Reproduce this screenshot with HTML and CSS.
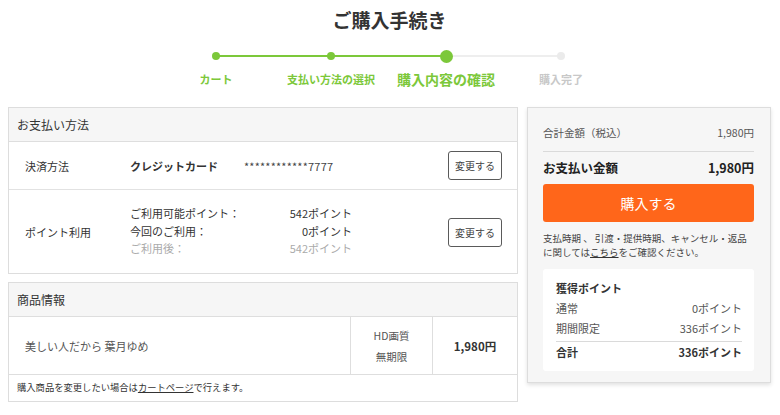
FILE: index.html
```html
<!DOCTYPE html>
<html lang="ja">
<head>
<meta charset="utf-8">
<title>ご購入手続き</title>
<link rel="stylesheet" href="styles.css">
</head>
<body>
<div class="page">
  <h1 class="title">ご購入手続き</h1>
  <ol class="steps">
    <li class="step done first"><span class="dot-row"><span class="dot"></span></span><span class="label">カート</span></li>
    <li class="step done"><span class="dot-row"><span class="dot"></span></span><span class="label">支払い方法の選択</span></li>
    <li class="step current"><span class="dot-row"><span class="dot"></span></span><span class="label">購入内容の確認</span></li>
    <li class="step todo"><span class="dot-row"><span class="dot"></span></span><span class="label">購入完了</span></li>
  </ol>

  <div class="main">
    <div class="left">
      <section class="card">
        <div class="card-head">お支払い方法</div>
        <div class="row row-method">
          <div class="row-label">決済方法</div>
          <div class="method-name">クレジットカード</div>
          <div class="card-number">************7777</div>
          <button class="change-btn">変更する</button>
        </div>
        <div class="row row-points">
          <div class="row-label">ポイント利用</div>
          <div class="points-grid">
            <span>ご利用可能ポイント：</span><span class="val">542ポイント</span>
            <span>今回のご利用：</span><span class="val">0ポイント</span>
            <span class="muted">ご利用後：</span><span class="val muted">542ポイント</span>
          </div>
          <button class="change-btn">変更する</button>
        </div>
      </section>

      <section class="card product-card">
        <div class="card-head">商品情報</div>
        <div class="product-row">
          <div class="product-title">美しい人だから 葉月ゆめ</div>
          <div class="product-quality"><span>HD画質</span><span>無期限</span></div>
          <div class="product-price">1,980円</div>
        </div>
        <div class="product-foot">購入商品を変更したい場合は<a href="#" class="ulink">カートページ</a>で行えます。</div>
      </section>
    </div>

    <aside class="summary">
      <div class="sum-row sum-total">
        <span>合計金額（税込）</span><span>1,980円</span>
      </div>
      <div class="sum-row sum-pay">
        <span>お支払い金額</span><span>1,980円</span>
      </div>
      <button class="buy-btn">購入する</button>
      <p class="note">支払時期 、 引渡・提供時期、キャンセル・返品<br>に関しては<a href="#" class="ulink">こちら</a>をご確認ください。</p>
      <div class="earn">
        <div class="earn-head">獲得ポイント</div>
        <div class="earn-row"><span>通常</span><span>0ポイント</span></div>
        <div class="earn-row"><span>期間限定</span><span>336ポイント</span></div>
        <div class="earn-row earn-total"><span>合計</span><span>336ポイント</span></div>
      </div>
    </aside>
  </div>
</div>
</body>
</html>
```

FILE: styles.css
```css
* { box-sizing: border-box; }

body {
  margin: 0;
  background: #fff;
  color: #333;
  font-family: "Noto Sans CJK JP", "Noto Sans", sans-serif;
  font-size: 11px;
}

.page {
  padding: 8px 9px 0 8px;
}

.title {
  margin: 0;
  text-align: center;
  font-size: 19px;
  line-height: 24px;
  font-weight: 700;
  color: #333;
}

.steps {
  list-style: none;
  margin: 17px 0 0;
  padding: 0 2px 0 0;
  display: grid;
  grid-template-columns: repeat(4, 115px);
  justify-content: center;
}

.step {
  display: flex;
  flex-direction: column;
  align-items: center;
}

.dot-row {
  position: relative;
  width: 100%;
  height: 14px;
  display: flex;
  align-items: center;
  justify-content: center;
}

.dot-row::before {
  content: "";
  position: absolute;
  left: -50%;
  right: 50%;
  top: 6px;
  height: 2px;
  background: #7cc83a;
}

.first .dot-row::before { display: none; }
.todo .dot-row::before { background: #eeeeee; }

.dot {
  position: relative;
  z-index: 1;
  width: 8px;
  height: 8px;
  border-radius: 50%;
  background: #7cc83a;
}

.current .dot { width: 13px; height: 13px; }
.todo .dot { background: #ebebeb; }

.label {
  margin-top: 8px;
  height: 16px;
  line-height: 16px;
  font-size: 11px;
  font-weight: 700;
  color: #7cc83a;
  white-space: nowrap;
}

.current .label { font-size: 14px; }
.todo .label { color: #c8c8c8; }

.main {
  margin-top: 20px;
  display: flex;
  gap: 9px;
  align-items: flex-start;
}

.left { width: 510px; }

.card {
  border: 1px solid #dddddd;
  background: #fff;
}

.card-head {
  height: 34px;
  line-height: 33px;
  padding-left: 8px;
  background: #f6f6f6;
  border-bottom: 1px solid #dedede;
  font-size: 12px;
  color: #333;
}

.row {
  display: flex;
  align-items: center;
  padding: 0 15px 0 16px;
  color: #333;
}

.row-method {
  height: 48px;
  border-bottom: 1px solid #e2e2e2;
}

.row-points { height: 83px; }

.row-label { width: 105px; }

.method-name {
  width: 114px;
  font-weight: 700;
}

.card-number {
  letter-spacing: 0.2px;
  color: #444;
}

.points-grid {
  width: 222px;
  display: grid;
  grid-template-columns: 1fr auto;
  line-height: 17.5px;
}

.points-grid .val { text-align: right; }
.muted { color: #aaaaaa; }

.change-btn {
  margin-left: auto;
  width: 54px;
  height: 29px;
  padding: 0;
  border: 1px solid #5a5a5a;
  border-radius: 3px;
  background: #fff;
  color: #444;
  font-family: inherit;
  font-size: 10px;
}

.row-points .change-btn { margin-top: 2px; }

.product-card { margin-top: 8px; }

.product-row {
  display: grid;
  grid-template-columns: 341px 83px 1fr;
  height: 58px;
  border-bottom: 1px solid #dedede;
  color: #555;
}

.product-title {
  display: flex;
  align-items: center;
  padding-left: 16px;
}

.product-quality {
  border-left: 1px solid #dedede;
  border-right: 1px solid #dedede;
  display: flex;
  flex-direction: column;
  align-items: center;
  justify-content: center;
  line-height: 21px;
  font-size: 10.5px;
}

.product-price {
  display: flex;
  align-items: center;
  justify-content: center;
  font-size: 11.5px;
  font-weight: 700;
  color: #333;
}

.product-foot {
  height: 26px;
  line-height: 25px;
  padding-left: 8px;
  font-size: 9.3px;
  color: #333;
}

.ulink {
  color: #333;
  text-decoration: underline;
}

.summary {
  width: 244px;
  background: #f6f6f6;
  border: 1px solid #dddddd;
  box-shadow: 0 2px 4px rgba(0, 0, 0, 0.12);
  padding: 15px 16px 11px 15px;
}

.sum-row {
  display: flex;
  justify-content: space-between;
  align-items: center;
  line-height: 20px;
}

.sum-total {
  font-size: 10.5px;
  color: #555;
  padding-bottom: 8px;
  border-bottom: 1px solid #dadada;
}

.sum-pay {
  margin-top: 6px;
  font-size: 12.5px;
  font-weight: 700;
  color: #222;
}

.buy-btn {
  display: block;
  width: 100%;
  height: 38px;
  margin-top: 6px;
  border: 0;
  border-radius: 3px;
  background: #ff661a;
  color: #fff;
  font-family: inherit;
  font-size: 14px;
}

.note {
  margin: 9px 0 0;
  font-size: 9.5px;
  line-height: 14px;
  color: #444;
  white-space: nowrap;
}

.earn {
  margin-top: 10px;
  background: #fff;
  border-radius: 3px;
  padding: 9px 12px 9px 13px;
}

.earn-head {
  font-weight: 700;
  line-height: 20px;
  color: #333;
}

.earn-row {
  display: flex;
  justify-content: space-between;
  line-height: 20px;
  color: #555;
}

.earn-total {
  margin-top: 3px;
  border-top: 1px solid #dadada;
  font-weight: 700;
  color: #333;
}
```
